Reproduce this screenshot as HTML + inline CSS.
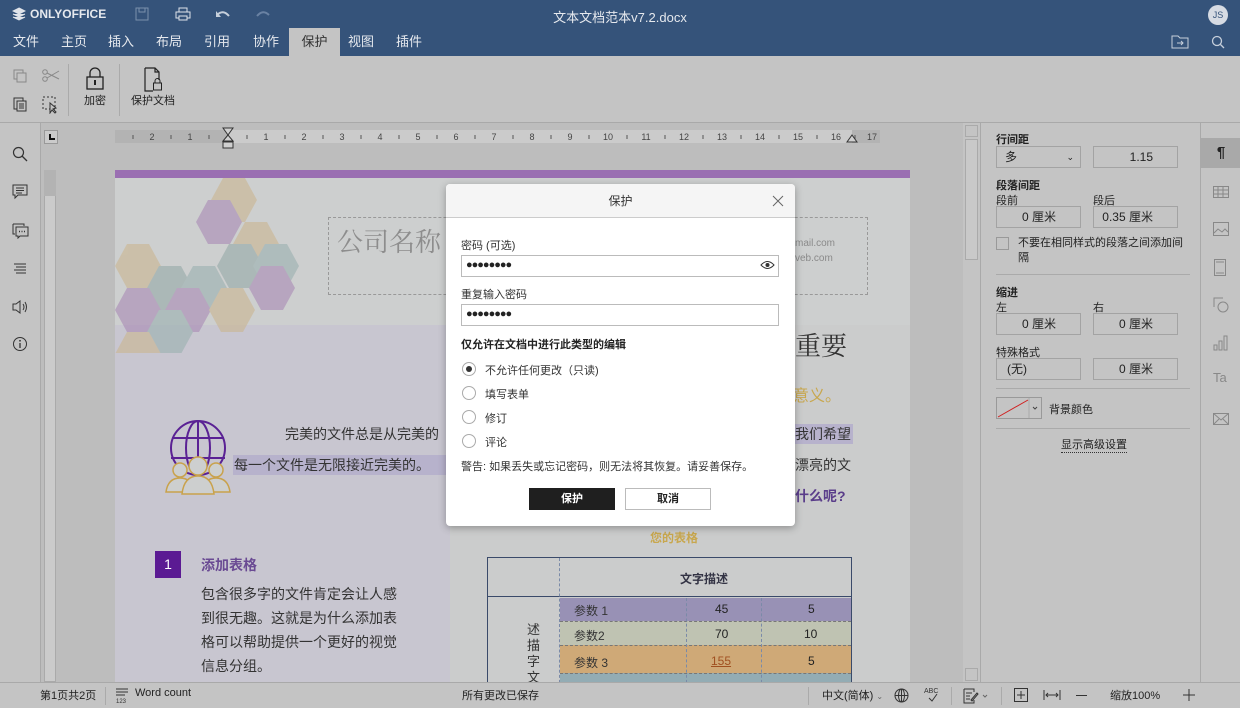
<!DOCTYPE html>
<html><head><meta charset="utf-8"><style>
*{box-sizing:border-box;margin:0;padding:0}
body{width:1240px;height:708px;overflow:hidden;position:relative;background:#bdbdbd;font-family:"Liberation Sans","Noto Sans CJK SC",sans-serif;font-size:12px;color:#222}
.a{position:absolute}
.hdr{left:0;top:0;width:1240px;height:56px;background:#35537a;color:#e6e9ee}
.tab{position:absolute;top:28px;height:28px;line-height:28px;font-size:13px;color:#e6e9ee}
.tb{left:0;top:56px;width:1240px;height:67px;background:#c4c4c4;border-bottom:1px solid #a9a9a9}
.ls{left:0;top:123px;width:41px;height:559px;background:#c4c4c4;border-right:1px solid #a9a9a9}
.rp{left:980px;top:123px;width:220px;height:559px;background:#c4c4c4;border-left:1px solid #a9a9a9}
.ri{left:1200px;top:123px;width:40px;height:559px;background:#c4c4c4;border-left:1px solid #a9a9a9}
.sb{left:0;top:682px;width:1240px;height:26px;background:#c4c4c4;border-top:1px solid #a9a9a9;font-size:11px}
.inp{position:absolute;height:22px;border:1px solid #a3a3a3;background:#c4c4c4;font-size:12px;text-align:right;padding-right:24px;line-height:20px}
.lbl{position:absolute;font-size:11px;color:#222}
.dlg{left:446px;top:184px;width:349px;height:342px;background:#fff;border-radius:4px;box-shadow:0 2px 8px rgba(0,0,0,.3)}
.radio{position:absolute;width:14px;height:14px;border:1px solid #aaa;border-radius:50%;left:16px}
.rt{position:absolute;left:39px;font-size:11px;color:#333}
</style></head><body>
<div class="a hdr">
 <div class="a" style="left:12px;top:7px;width:14px;height:14px"><svg width="14" height="14"><path d="M7 1L13 4 7 7 1 4Z M1 7L7 10 13 7 M1 10L7 13 13 10" fill="#dfe3ea" stroke="#dfe3ea" stroke-width="1"/></svg></div>
 <div class="a" style="left:30px;top:7px;font-size:12px;font-weight:bold;color:#e6e9ee">ONLYOFFICE</div>
 <svg class="a" style="left:135px;top:7px" width="14" height="14"><rect x="1" y="1" width="12" height="12" fill="none" stroke="#7a90ac"/><rect x="4" y="1" width="6" height="4" fill="none" stroke="#7a90ac"/></svg>
 <svg class="a" style="left:175px;top:7px" width="16" height="14"><rect x="1" y="5" width="14" height="6" fill="none" stroke="#dfe3ea"/><rect x="4" y="1" width="8" height="4" fill="none" stroke="#dfe3ea"/><rect x="4" y="9" width="8" height="4" fill="#35537a" stroke="#dfe3ea"/></svg>
 <svg class="a" style="left:215px;top:9px" width="16" height="10"><path d="M2 6Q8 0 14 7" fill="none" stroke="#c6cfdb" stroke-width="2"/><path d="M1 2V8H6" fill="#c6cfdb"/></svg>
 <svg class="a" style="left:255px;top:9px" width="16" height="10"><path d="M14 6Q8 0 2 7" fill="none" stroke="#6a82a3" stroke-width="2"/></svg>
 <div class="a" style="left:0;width:1240px;top:7px;text-align:center;font-size:13px;color:#e6e9ee">文本文档范本v7.2.docx</div>
 <div class="a" style="left:1208px;top:5px;width:20px;height:20px;border-radius:50%;background:#d6dbe3;color:#35537a;font-size:9px;text-align:center;line-height:20px">JS</div>
 <div class="tab" style="left:13px">文件</div><div class="tab" style="left:61px">主页</div><div class="tab" style="left:108px">插入</div><div class="tab" style="left:156px">布局</div><div class="tab" style="left:204px">引用</div><div class="tab" style="left:253px">协作</div>
 <div class="tab" style="left:289px;width:51px;background:#c4c4c4;color:#333;text-align:center">保护</div>
 <div class="tab" style="left:348px">视图</div><div class="tab" style="left:396px">插件</div>
 <svg class="a" style="left:1171px;top:35px" width="18" height="14"><path d="M1 1H7L9 3H17V13H1Z" fill="none" stroke="#c6cfdb"/><path d="M6 8H12M10 6L12 8 10 10" stroke="#c6cfdb" fill="none"/></svg>
 <svg class="a" style="left:1211px;top:35px" width="14" height="14"><circle cx="6" cy="6" r="4.5" fill="none" stroke="#c6cfdb" stroke-width="1.3"/><path d="M9.5 9.5L13 13" stroke="#c6cfdb" stroke-width="1.3"/></svg>
</div>
<div class="a tb">
 <svg class="a" style="left:13px;top:13px" width="14" height="14"><rect x="1" y="1" width="9" height="9" fill="none" stroke="#888"/><rect x="4" y="4" width="9" height="9" fill="#c4c4c4" stroke="#888"/></svg>
 <svg class="a" style="left:42px;top:12px" width="18" height="14"><circle cx="3" cy="4" r="2.3" fill="none" stroke="#888"/><circle cx="3" cy="11" r="2.3" fill="none" stroke="#888"/><path d="M5 5L17 11M5 10L17 3" stroke="#888"/></svg>
 <svg class="a" style="left:13px;top:40px" width="14" height="16"><rect x="1" y="2" width="9" height="11" fill="none" stroke="#333"/><rect x="4" y="5" width="9" height="10" fill="#c4c4c4" stroke="#333"/><path d="M6 8H11M6 10H11M6 12H11" stroke="#333"/></svg>
 <svg class="a" style="left:42px;top:40px" width="18" height="18"><rect x="1" y="1" width="12" height="12" fill="none" stroke="#333" stroke-dasharray="2 2"/><path d="M8 7V17L10 14 13 17 14 16 11 13 14 12Z" fill="#c4c4c4" stroke="#333"/></svg>
 <div class="a" style="left:68px;top:8px;width:1px;height:52px;background:#aaa"></div>
 <svg class="a" style="left:85px;top:11px" width="20" height="24"><path d="M5 10V6A5 5 0 0 1 15 6V10" fill="none" stroke="#222" stroke-width="1.3"/><rect x="2" y="10" width="16" height="12" fill="none" stroke="#222" stroke-width="1.3"/><rect x="9" y="13" width="2" height="5" fill="#222"/></svg>
 <div class="a" style="left:84px;top:36px;font-size:11px">加密</div>
 <div class="a" style="left:119px;top:8px;width:1px;height:52px;background:#aaa"></div>
 <svg class="a" style="left:143px;top:11px" width="22" height="26"><path d="M2 1H12L16 5V13M10 24H2V1M12 1V5H16" fill="none" stroke="#222" stroke-width="1.2"/><path d="M12 16V14A2.5 2.5 0 0 1 17 14V16" fill="none" stroke="#222"/><rect x="10.5" y="16" width="8" height="7" fill="none" stroke="#222"/></svg>
 <div class="a" style="left:131px;top:36px;font-size:11px">保护文档</div>
</div>
<div class="a ls">
 <svg class="a" style="left:12px;top:23px" width="16" height="16"><circle cx="6.5" cy="6.5" r="5" fill="none" stroke="#333" stroke-width="1.2"/><path d="M10 10L15 15" stroke="#333" stroke-width="1.3"/></svg>
 <svg class="a" style="left:12px;top:61px" width="16" height="16"><path d="M1 1H15V11H6L3 14V11H1Z" fill="none" stroke="#333"/><path d="M4 4H12M4 6.5H12M4 9H10" stroke="#333"/></svg>
 <svg class="a" style="left:12px;top:100px" width="17" height="16"><path d="M1 1H12V3" fill="none" stroke="#333"/><path d="M1 1V11H3" fill="none" stroke="#333"/><path d="M4 4H16V13H8L6 15V13H4Z" fill="none" stroke="#333"/><path d="M7 8.5H8M9.5 8.5H10.5M12 8.5H13" stroke="#333" stroke-width="1.5"/></svg>
 <svg class="a" style="left:13px;top:139px" width="14" height="14"><path d="M1 2H13M3 5H13M1 8H13M3 11H13" stroke="#333"/></svg>
 <svg class="a" style="left:12px;top:176px" width="17" height="16"><path d="M1 5H4L8 2V14L4 11H1Z" fill="none" stroke="#333"/><path d="M11 5Q13 8 11 11M13 3Q16 8 13 13" fill="none" stroke="#333"/></svg>
 <svg class="a" style="left:12px;top:213px" width="16" height="16"><circle cx="8" cy="8" r="6.5" fill="none" stroke="#333"/><path d="M8 7V12" stroke="#333" stroke-width="1.3"/><circle cx="8" cy="4.8" r=".9" fill="#333"/></svg>
</div>
<!-- rulers -->
<div class="a" style="left:44px;top:130px;width:14px;height:14px;border:1px solid #999;background:#cbcbcb"><div style="position:absolute;left:4px;top:3px;width:6px;height:6px;border-left:2px solid #111;border-bottom:2px solid #111"></div></div>
<div class="a" style="left:115px;top:130px;width:113px;height:13px;background:#b3b3b3"></div>
<div class="a" style="left:228px;top:130px;width:624px;height:13px;background:#cbcbcb"></div>
<div class="a" style="left:852px;top:130px;width:28px;height:13px;background:#b3b3b3"></div>
<svg class="a" style="left:115px;top:130px" width="765" height="18">
 <g fill="#444" font-size="9" font-family="Liberation Sans" text-anchor="middle">
  <text x="37" y="10">2</text><text x="75" y="10">1</text>
  <text x="151" y="10">1</text><text x="189" y="10">2</text><text x="227" y="10">3</text><text x="265" y="10">4</text><text x="303" y="10">5</text><text x="341" y="10">6</text><text x="379" y="10">7</text><text x="417" y="10">8</text><text x="455" y="10">9</text><text x="493" y="10">10</text><text x="531" y="10">11</text><text x="569" y="10">12</text><text x="607" y="10">13</text><text x="645" y="10">14</text><text x="683" y="10">15</text><text x="721" y="10">16</text><text x="757" y="10">17</text>
 </g>
 <g stroke="#555">
  <path d="M18 5V9M56 5V9M94 5V9M132 5V9M170 5V9M208 5V9M246 5V9M284 5V9M322 5V9M360 5V9M398 5V9M436 5V9M474 5V9M512 5V9M550 5V9M588 5V9M626 5V9M664 5V9M702 5V9M740 5V9"/>
 </g>
</svg>
<svg class="a" style="left:222px;top:127px" width="12" height="22"><path d="M1 1H11L6 8Z M6 8L1 14H11Z" fill="#d0d0d0" stroke="#333"/><rect x="1" y="15" width="10" height="6" fill="#d0d0d0" stroke="#333"/></svg>
<svg class="a" style="left:846px;top:134px" width="12" height="10"><path d="M6 1L11 8H1Z" fill="#d0d0d0" stroke="#333"/></svg>
<div class="a" style="left:44px;top:170px;width:12px;height:512px;background:#cbcbcb;border:1px solid #aaa"></div>
<div class="a" style="left:44px;top:170px;width:12px;height:26px;background:#b3b3b3"></div>
<!-- page -->
<div class="a" style="left:115px;top:170px;width:795px;height:512px;background:#cdcfcf;overflow:hidden">
 <div class="a" style="left:0;top:0;width:795px;height:8px;background:#9a6fb2"></div>
 <div class="a" style="left:0;top:155px;width:335px;height:360px;background:#c8c6d0"></div>
 <div class="a" style="left:335px;top:155px;width:460px;height:360px;background:#cbcccc"></div>
 <svg class="a" style="left:0;top:8px" width="200" height="175" viewBox="0 0 200 175">
  <g opacity=".6">
  <polygon points="108,0 130,0 142,22 130,44 108,44 96,22" fill="#cbb690"/>
  <polygon points="93,22 115,22 127,44 115,66 93,66 81,44" fill="#a98ab5"/>
  <polygon points="130,44 152,44 164,66 152,88 130,88 118,66" fill="#cbb690"/>
  <polygon points="114,66 136,66 148,88 136,110 114,110 102,88" fill="#96a9a8"/>
  <polygon points="150,66 172,66 184,88 172,110 150,110 138,88" fill="#9ab1b0"/>
  <polygon points="12,66 34,66 46,88 34,110 12,110 0,88" fill="#cbb690"/>
  <polygon points="44,88 66,88 78,110 66,132 44,132 32,110" fill="#96a9a8"/>
  <polygon points="78,88 100,88 112,110 100,132 78,132 66,110" fill="#9ab1b0"/>
  <polygon points="146,88 168,88 180,110 168,132 146,132 134,110" fill="#a98ab5"/>
  <polygon points="12,110 34,110 46,132 34,154 12,154 0,132" fill="#a98ab5"/>
  <polygon points="62,110 84,110 96,132 84,154 62,154 50,132" fill="#a98ab5"/>
  <polygon points="106,110 128,110 140,132 128,154 106,154 94,132" fill="#cbb690"/>
  <polygon points="44,132 66,132 78,154 66,176 44,176 32,154" fill="#9ab1b0"/>
  <polygon points="12,154 34,154 46,176 34,198 12,198 0,176" fill="#cbb690"/>
  </g>
 </svg>
 <div class="a" style="left:213px;top:47px;width:540px;height:78px;border:1px dashed #999"></div>
 <div class="a" style="left:222px;top:52px;font-size:26px;color:#8d8d8d;font-family:'Noto Serif CJK SC',serif">公司名称</div>
 <div class="a" style="left:680px;top:66px;font-size:10px;color:#8a8a8a;line-height:15px">mail.com<br>veb.com</div>
 <div class="a" style="left:680px;top:156px;font-size:26px;color:#333;font-family:'Noto Serif CJK SC',serif">重要</div>
 <div class="a" style="left:678px;top:212px;font-size:16px;color:#c8a74e">意义。</div>
 <svg class="a" style="left:45px;top:248px" width="80" height="80"><circle cx="38" cy="30" r="27" fill="none" stroke="#5a2194" stroke-width="2"/><ellipse cx="38" cy="30" rx="12" ry="27" fill="none" stroke="#5a2194" stroke-width="2"/><path d="M38 3V57M12 20H64M11 40H65" stroke="#5a2194" stroke-width="2"/><g fill="#cdcfcf" stroke="#c9a24c" stroke-width="1.5"><circle cx="20" cy="52" r="7"/><circle cx="56" cy="52" r="7"/><path d="M6 74Q8 60 20 60Q32 60 34 74Z"/><path d="M42 74Q44 60 56 60Q68 60 70 74Z"/><circle cx="38" cy="48" r="9"/><path d="M22 76Q24 58 38 58Q52 58 54 76Z"/></g></svg>
 <div class="a" style="left:170px;top:254px;font-size:14px;color:#333">完美的文件总是从完美的</div>
 <div class="a" style="left:118px;top:285px;width:213px;height:20px;background:#b7b2cc"></div>
 <div class="a" style="left:119px;top:285px;font-size:14px;color:#333">每一个文件是无限接近完美的。</div>
 <div class="a" style="left:678px;top:254px;width:60px;height:20px;background:#b7b2cc"></div>
 <div class="a" style="left:680px;top:254px;font-size:14px;color:#333">我们希望</div>
 <div class="a" style="left:680px;top:285px;font-size:14px;color:#333">漂亮的文</div>
 <div class="a" style="left:680px;top:316px;font-size:14px;color:#5a3d8a;font-weight:bold">什么呢?</div>
 <div class="a" style="left:535px;top:359px;font-size:12px;color:#c8a74e;font-weight:bold">您的表格</div>
 <div class="a" style="left:40px;top:381px;width:26px;height:27px;background:#5b1a93;color:#fff;font-size:14px;text-align:center;line-height:27px">1</div>
 <div class="a" style="left:86px;top:385px;font-size:14px;color:#6a4a93;font-weight:bold">添加表格</div>
 <div class="a" style="left:86px;top:412px;font-size:14px;color:#333;line-height:24px;width:205px">包含很多字的文件肯定会让人感到很无趣。这就是为什么添加表格可以帮助提供一个更好的视觉信息分组。</div>
 <div class="a" style="left:372px;top:387px;width:365px;height:130px;border:1px solid #3a4a6a"></div>
 <div class="a" style="left:373px;top:426px;width:364px;height:1px;background:#3a4a6a"></div>
 <div class="a" style="left:444px;top:388px;width:1px;height:130px;border-left:1px dashed #7a8aa8"></div>
 <div class="a" style="left:565px;top:400px;font-size:12px;font-weight:bold;color:#334">文字描述</div>
 <div class="a" style="left:445px;top:428px;width:291px;height:23px;background:#9891b5"></div>
 <div class="a" style="left:445px;top:451px;width:291px;height:24px;background:#bfc3b2;border-top:1px dashed #777"></div>
 <div class="a" style="left:445px;top:475px;width:291px;height:28px;background:#cfa977;border-top:1px dashed #777"></div>
 <div class="a" style="left:445px;top:503px;width:291px;height:10px;background:#93acb4;border-top:1px dashed #777"></div>
 <div class="a" style="left:571px;top:428px;height:90px;border-left:1px dashed #7a8aa8"></div>
 <div class="a" style="left:646px;top:428px;height:90px;border-left:1px dashed #7a8aa8"></div>
 <div class="a" style="left:459px;top:432px;font-size:12px;color:#333">参数 1</div><div class="a" style="left:600px;top:432px;font-size:12px">45</div><div class="a" style="left:693px;top:432px;font-size:12px">5</div>
 <div class="a" style="left:459px;top:457px;font-size:12px;color:#333">参数2</div><div class="a" style="left:600px;top:457px;font-size:12px">70</div><div class="a" style="left:689px;top:457px;font-size:12px">10</div>
 <div class="a" style="left:459px;top:484px;font-size:12px;color:#333">参数 3</div><div class="a" style="left:596px;top:484px;font-size:12px;color:#a05020;text-decoration:underline">155</div><div class="a" style="left:693px;top:484px;font-size:12px">5</div>
 <div class="a" style="left:412px;top:452px;font-size:13px;color:#333;width:14px;line-height:16px">述描字文</div>
</div>
<!-- scrollbar -->
<div class="a" style="left:963px;top:123px;width:17px;height:559px;background:#c4c4c4"></div>
<div class="a" style="left:965px;top:125px;width:13px;height:12px;border:1px solid #aaa"></div>
<div class="a" style="left:965px;top:139px;width:13px;height:121px;border:1px solid #aaa;background:#c9c9c9"></div>
<div class="a" style="left:965px;top:668px;width:13px;height:13px;border:1px solid #aaa"></div>
<!-- right panel -->
<div class="a rp">
 <div class="lbl" style="left:15px;top:8px;font-weight:bold">行间距</div>
 <div class="inp" style="left:15px;top:23px;width:85px;text-align:left;padding-left:8px">多<span style="position:absolute;right:6px;font-size:9px">⌄</span></div>
 <div class="inp" style="left:112px;top:23px;width:85px">1.15</div>
 <div class="lbl" style="left:15px;top:54px;font-weight:bold">段落间距</div>
 <div class="lbl" style="left:15px;top:69px">段前</div><div class="lbl" style="left:112px;top:69px">段后</div>
 <div class="inp" style="left:15px;top:83px;width:85px">0 厘米</div>
 <div class="inp" style="left:112px;top:83px;width:85px">0.35 厘米</div>
 <div class="a" style="left:15px;top:114px;width:13px;height:13px;border:1px solid #999"></div>
 <div class="lbl" style="left:37px;top:113px;width:170px;line-height:15px">不要在相同样式的段落之间添加间隔</div>
 <div class="a" style="left:15px;top:151px;width:194px;height:1px;background:#aaa"></div>
 <div class="lbl" style="left:15px;top:161px;font-weight:bold">缩进</div>
 <div class="lbl" style="left:15px;top:176px">左</div><div class="lbl" style="left:112px;top:176px">右</div>
 <div class="inp" style="left:15px;top:190px;width:85px">0 厘米</div>
 <div class="inp" style="left:112px;top:190px;width:85px">0 厘米</div>
 <div class="lbl" style="left:15px;top:221px">特殊格式</div>
 <div class="inp" style="left:15px;top:235px;width:85px;text-align:left;padding-left:10px">(无)</div>
 <div class="inp" style="left:112px;top:235px;width:85px">0 厘米</div>
 <div class="a" style="left:15px;top:265px;width:194px;height:1px;background:#aaa"></div>
 <svg class="a" style="left:15px;top:274px" width="46" height="22"><rect x=".5" y=".5" width="45" height="21" fill="#c4c4c4" stroke="#999"/><path d="M2 20L32 3" stroke="#d02020"/><path d="M33 1V21" stroke="#aaa"/><path d="M37 10L39 12 41 10" fill="none" stroke="#444"/></svg>
 <div class="lbl" style="left:68px;top:278px">背景颜色</div>
 <div class="a" style="left:15px;top:305px;width:194px;height:1px;background:#aaa"></div>
 <div class="lbl" style="left:80px;top:313px;border-bottom:1px dotted #333">显示高级设置</div>
</div>
<div class="a ri">
 <div class="a" style="left:0;top:15px;width:40px;height:30px;background:#a9a9a9;text-align:center;line-height:30px;font-size:15px;font-weight:bold">¶</div>
 <svg class="a" style="left:12px;top:63px" width="16" height="12"><rect x=".5" y=".5" width="15" height="11" fill="none" stroke="#888"/><path d="M0 4H16M0 8H16M5 0V12M10 0V12" stroke="#888"/></svg>
 <svg class="a" style="left:12px;top:99px" width="16" height="14"><rect x=".5" y=".5" width="15" height="13" fill="none" stroke="#888"/><path d="M1 11L5 7 9 10 12 7 15 10" fill="none" stroke="#888"/></svg>
 <svg class="a" style="left:13px;top:136px" width="12" height="17"><rect x=".5" y=".5" width="11" height="16" fill="none" stroke="#888"/><path d="M2 3H10M2 14H10" stroke="#888"/></svg>
 <svg class="a" style="left:12px;top:174px" width="16" height="16"><path d="M1 10V1H10" fill="none" stroke="#888"/><circle cx="10" cy="10" r="5" fill="none" stroke="#888"/></svg>
 <svg class="a" style="left:12px;top:212px" width="16" height="16"><rect x="1" y="10" width="3" height="5" fill="none" stroke="#888"/><rect x="6" y="6" width="3" height="9" fill="none" stroke="#888"/><rect x="11" y="1" width="3" height="14" fill="none" stroke="#888"/></svg>
 <div class="a" style="left:12px;top:247px;font-size:13px;color:#888">Ta</div>
 <svg class="a" style="left:12px;top:290px" width="16" height="12"><rect x=".5" y=".5" width="15" height="11" fill="none" stroke="#888"/><path d="M0 0L8 7 16 0M0 12L6 6M16 12L10 6" fill="none" stroke="#888"/></svg>
</div>
<!-- status bar -->
<div class="a sb">
 <div class="a" style="left:40px;top:4px">第1页共2页</div>
 <div class="a" style="left:105px;top:4px;width:1px;height:18px;background:#aaa"></div>
 <svg class="a" style="left:115px;top:4px" width="14" height="18"><path d="M1 2H13M1 5H13M1 8H10" stroke="#333"/><text x="1" y="16" font-size="6" fill="#333">123</text></svg>
 <div class="a" style="left:135px;top:4px">Word count</div>
 <div class="a" style="left:462px;top:4px">所有更改已保存</div>
 <div class="a" style="left:808px;top:4px;width:1px;height:18px;background:#aaa"></div>
 <div class="a" style="left:822px;top:4px">中文(简体) <span style="font-size:8px;color:#666">⌄</span></div>
 <svg class="a" style="left:894px;top:5px" width="15" height="15"><circle cx="7.5" cy="7.5" r="6.5" fill="none" stroke="#333"/><ellipse cx="7.5" cy="7.5" rx="3" ry="6.5" fill="none" stroke="#333"/><path d="M1 7.5H14M7.5 1V14" stroke="#333"/></svg>
 <svg class="a" style="left:924px;top:3px" width="18" height="18"><text x="0" y="7" font-size="7" fill="#333" font-family="Liberation Sans">ABC</text><path d="M5 12L8 15 13 8" fill="none" stroke="#333"/></svg>
 <div class="a" style="left:951px;top:4px;width:1px;height:18px;background:#aaa"></div>
 <svg class="a" style="left:963px;top:5px" width="26" height="16"><path d="M1 1H11V4M1 1V15H11V12" fill="none" stroke="#333"/><path d="M3 5H9M3 8H7M3 11H7" stroke="#333"/><path d="M8 12L14 5 15 6 9 13Z" fill="none" stroke="#333"/><path d="M20 7L22 9 24 7" fill="none" stroke="#666"/></svg>
 <div class="a" style="left:1001px;top:4px;width:1px;height:18px;background:#aaa"></div>
 <svg class="a" style="left:1014px;top:5px" width="14" height="14"><rect x=".5" y=".5" width="13" height="13" fill="none" stroke="#333"/><path d="M7 3V11M3 7H11" stroke="#333"/></svg>
 <svg class="a" style="left:1043px;top:7px" width="18" height="10"><path d="M1 0V10M17 0V10M3 5H15M5 3L3 5 5 7M13 3L15 5 13 7" fill="none" stroke="#333"/></svg>
 <div class="a" style="left:1076px;top:12px;width:11px;height:1px;background:#333"></div>
 <div class="a" style="left:1110px;top:4px">缩放100%</div>
 <svg class="a" style="left:1183px;top:6px" width="12" height="12"><path d="M6 0V12M0 6H12" stroke="#333"/></svg>
</div>
<!-- dialog -->
<div class="a dlg">
 <div class="a" style="left:0;top:0;width:349px;height:34px;background:#f5f5f5;border-bottom:1px solid #ccc;border-radius:4px 4px 0 0;text-align:center;line-height:34px;font-size:12px;color:#333">保护</div>
 <svg class="a" style="left:326px;top:11px" width="12" height="12"><path d="M1 1L11 11M11 1L1 11" stroke="#666"/></svg>
 <div class="a" style="left:15px;top:53px;font-size:11px;color:#333">密码 (可选)</div>
 <div class="a" style="left:15px;top:71px;width:318px;height:22px;border:1px solid #bbb;padding-left:4px;line-height:18px;font-size:11px;letter-spacing:-1px">●●●●●●●●</div>
 <svg class="a" style="left:314px;top:76px" width="15" height="10"><path d="M1 5Q7.5 -2 14 5Q7.5 12 1 5Z" fill="none" stroke="#333"/><circle cx="7.5" cy="5" r="2" fill="#333"/></svg>
 <div class="a" style="left:15px;top:102px;font-size:11px;color:#333">重复输入密码</div>
 <div class="a" style="left:15px;top:120px;width:318px;height:22px;border:1px solid #bbb;padding-left:4px;line-height:18px;font-size:11px;letter-spacing:-1px">●●●●●●●●</div>
 <div class="a" style="left:15px;top:152px;font-size:11px;font-weight:bold;color:#222">仅允许在文档中进行此类型的编辑</div>
 <div class="radio" style="top:178px"><div style="margin:3px;width:6px;height:6px;border-radius:50%;background:#333"></div></div><div class="rt" style="top:178px">不允许任何更改（只读)</div>
 <div class="radio" style="top:202px"></div><div class="rt" style="top:202px">填写表单</div>
 <div class="radio" style="top:226px"></div><div class="rt" style="top:226px">修订</div>
 <div class="radio" style="top:250px"></div><div class="rt" style="top:250px">评论</div>
 <div class="a" style="left:15px;top:274px;font-size:11px;color:#333">警告: 如果丢失或忘记密码，则无法将其恢复。请妥善保存。</div>
 <div class="a" style="left:83px;top:304px;width:86px;height:22px;background:#1f1f1f;color:#fff;font-weight:bold;text-align:center;line-height:22px;font-size:11px">保护</div>
 <div class="a" style="left:179px;top:304px;width:86px;height:22px;border:1px solid #bbb;text-align:center;line-height:20px;font-size:11px;font-weight:bold">取消</div>
</div>
</body></html>
